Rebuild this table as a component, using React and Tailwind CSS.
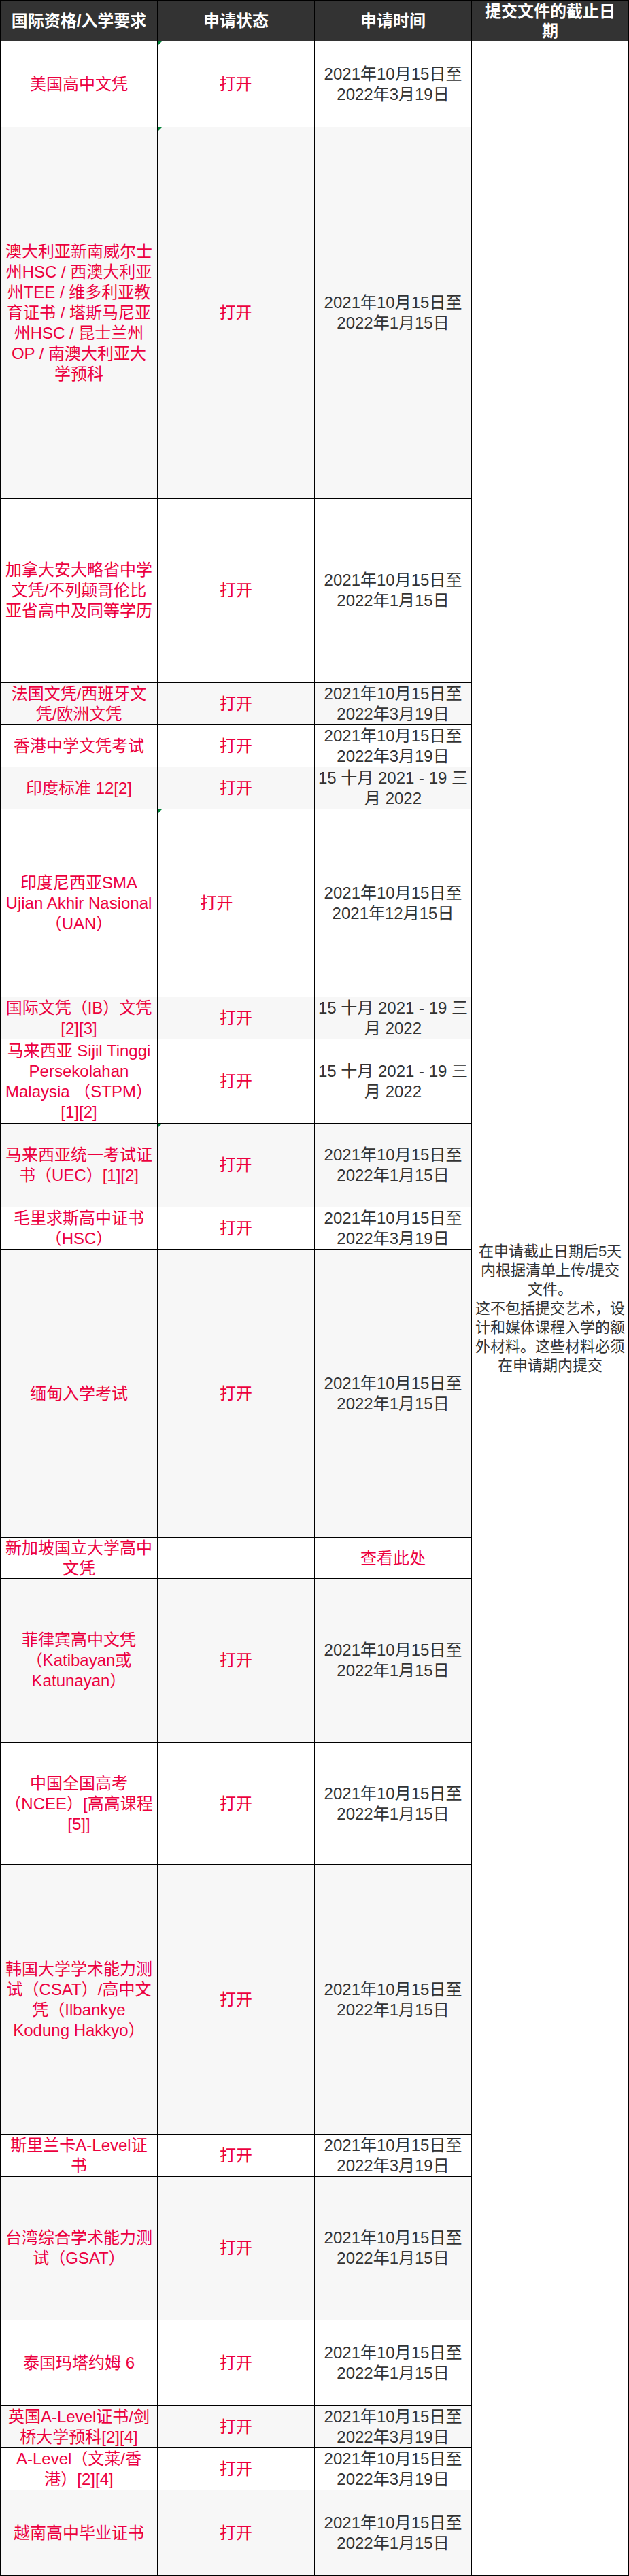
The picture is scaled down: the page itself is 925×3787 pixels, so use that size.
import React from 'react'

const font = "font-['Liberation_Sans','Noto_Sans_CJK_SC',sans-serif]"

const rows = [
  { name: '美国高中文凭', status: '打开', date: '2021年10月15日至2022年3月19日', mark: true, shift: 'pr-[6px]' },
  { name: '澳大利亚新南威尔士州HSC / 西澳大利亚州TEE / 维多利亚教育证书 / 塔斯马尼亚州HSC / 昆士兰州OP / 南澳大利亚大学预科', status: '打开', date: '2021年10月15日至2022年1月15日', mark: true, shift: 'pr-[6px]' },
  { name: '加拿大安大略省中学文凭/不列颠哥伦比亚省高中及同等学历', status: '打开', date: '2021年10月15日至2022年1月15日' },
  { name: '法国文凭/西班牙文凭/欧洲文凭', status: '打开', date: '2021年10月15日至2022年3月19日' },
  { name: '香港中学文凭考试', status: '打开', date: '2021年10月15日至2022年3月19日' },
  { name: '印度标准 12[2]', status: '打开', date: '15 十月 2021 - 19 三月 2022' },
  { name: '印度尼西亚SMA Ujian Akhir Nasional（UAN）', status: '打开', date: '2021年10月15日至2021年12月15日', mark: true, shift: 'pr-[62px]' },
  { name: '国际文凭（IB）文凭[2][3]', status: '打开', date: '15 十月 2021 - 19 三月 2022' },
  { name: '马来西亚 Sijil Tinggi Persekolahan Malaysia （STPM）[1][2]', status: '打开', date: '15 十月 2021 - 19 三月 2022' },
  { name: '马来西亚统一考试证书（UEC）[1][2]', status: '打开', date: '2021年10月15日至2022年1月15日', mark: true, shift: 'pr-[6px]' },
  { name: '毛里求斯高中证书（HSC）', status: '打开', date: '2021年10月15日至2022年3月19日' },
  { name: '缅甸入学考试', status: '打开', date: '2021年10月15日至2022年1月15日' },
  { name: '新加坡国立大学高中文凭', status: '', date: '查看此处', link: true },
  { name: '菲律宾高中文凭（Katibayan或Katunayan）', status: '打开', date: '2021年10月15日至2022年1月15日' },
  { name: '中国全国高考（NCEE）[高高课程[5]]', status: '打开', date: '2021年10月15日至2022年1月15日' },
  { name: '韩国大学学术能力测试（CSAT）/高中文凭（Ilbankye Kodung Hakkyo）', status: '打开', date: '2021年10月15日至2022年1月15日' },
  { name: '斯里兰卡A-Level证书', status: '打开', date: '2021年10月15日至2022年3月19日' },
  { name: '台湾综合学术能力测试（GSAT）', status: '打开', date: '2021年10月15日至2022年1月15日' },
  { name: '泰国玛塔约姆 6', status: '打开', date: '2021年10月15日至2022年1月15日' },
  { name: '英国A-Level证书/剑桥大学预科[2][4]', status: '打开', date: '2021年10月15日至2022年3月19日' },
  { name: 'A-Level（文莱/香港）[2][4]', status: '打开', date: '2021年10月15日至2022年3月19日' },
  { name: '越南高中毕业证书', status: '打开', date: '2021年10月15日至2022年1月15日' },
]

const cell = 'flex items-center justify-center text-center border-r border-b border-black'
const head = `${cell} bg-[#333333] text-white font-bold text-[24px] leading-[29px] px-[10px]`

export default function App() {
  return (
    <div className={`w-[925px] bg-white ${font}`}>
      <div className="grid grid-cols-[231px_231px_231px_231px] grid-rows-[60px_126px_546px_271px_62px_62px_62px_276px_62px_124px_123px_62px_424px_60px_241px_180px_396px_62px_211px_126px_62px_62px_126px] border-t border-l border-black">
        {/* Header */}
        <div className={head}>国际资格/入学要求</div>
        <div className={head}>申请状态</div>
        <div className={head}>申请时间</div>
        <div className={head}>提交文件的截止日期</div>

        {rows.map((r, i) => {
          const bg = i % 2 === 1 ? 'bg-[#f7f7f7]' : 'bg-white'
          return (
            <React.Fragment key={i}>
              <div className={`${cell} ${bg} px-[5px] text-[24px] leading-[30px] text-rose-600`} style={{ gridColumn: 1, gridRow: i + 2 }}>
                {r.name}
              </div>
              <div className={`${cell} ${bg} relative px-[5px] text-[24px] leading-[30px] text-rose-600 ${r.shift || ''}`} style={{ gridColumn: 2, gridRow: i + 2 }}>
                {r.mark && (
                  <span className="absolute top-0 left-0 w-0 h-0 border-t-[6px] border-r-[6px] border-t-green-700 border-r-transparent" />
                )}
                {r.status}
              </div>
              <div className={`${cell} ${bg} px-[3px] text-[24px] leading-[30px] ${r.link ? 'text-rose-600' : 'text-[#333333]'}`} style={{ gridColumn: 3, gridRow: i + 2 }}>
                {r.date}
              </div>
            </React.Fragment>
          )
        })}

        {/* Deadline note spanning all rows */}
        <div className={`${cell} bg-white px-[4px] text-[22px] leading-[28px] text-[#333333]`} style={{ gridColumn: 4, gridRow: `2 / span ${rows.length}` }}>
          <p>
            在申请截止日期后5天内根据清单上传/提交文件。
            <br />
            这不包括提交艺术，设计和媒体课程入学的额外材料。这些材料必须在申请期内提交
          </p>
        </div>
      </div>
    </div>
  )
}
